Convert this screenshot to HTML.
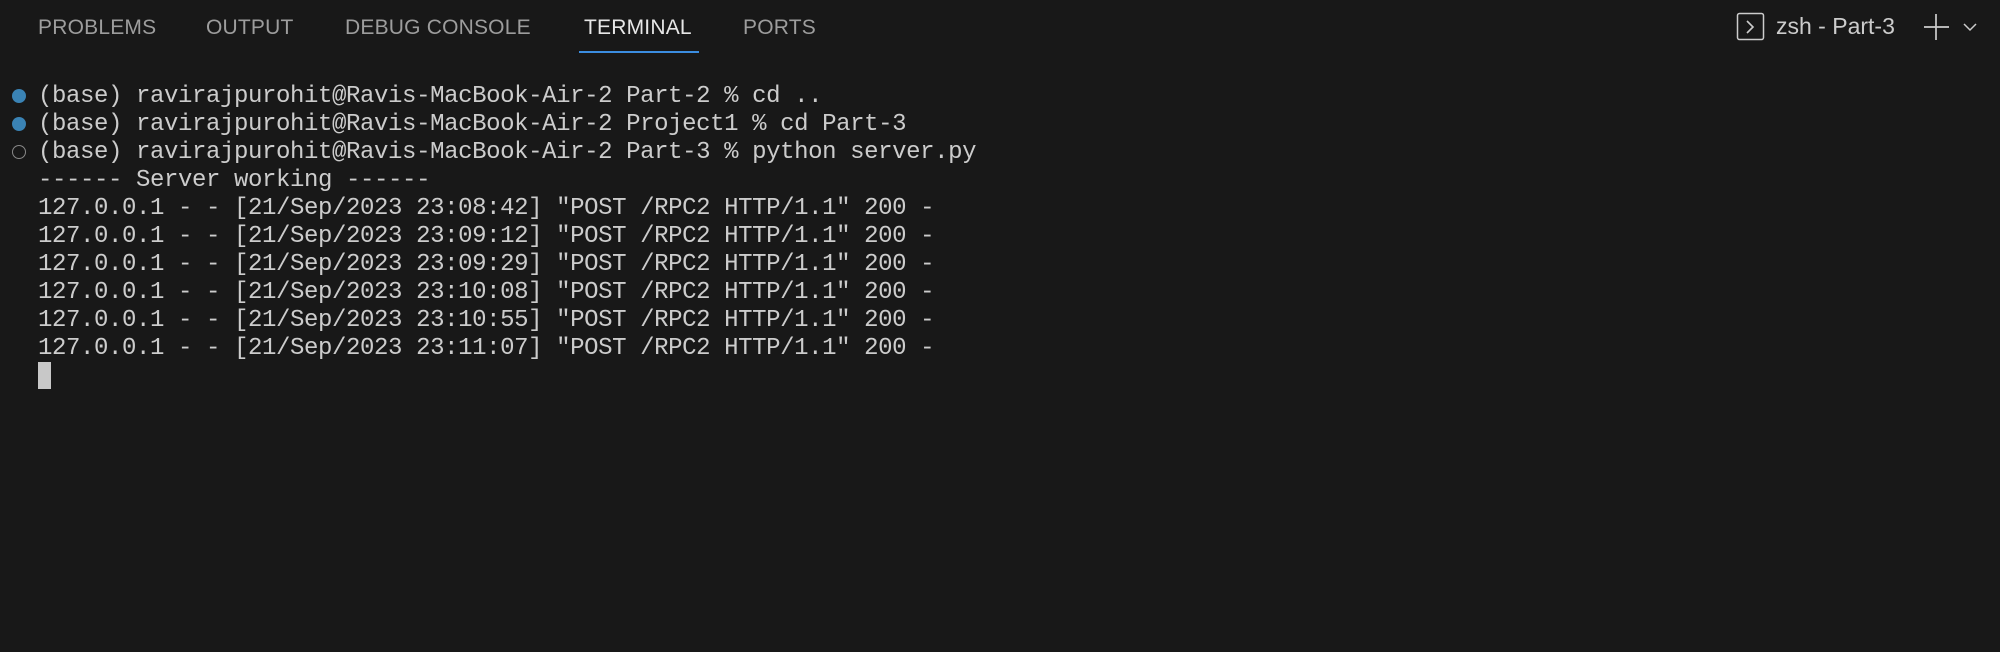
<!DOCTYPE html>
<html><head><style>
body{margin:0;width:2000px;height:652px;background:#181818;overflow:hidden;position:relative;font-family:"Liberation Sans",sans-serif}
.tab{position:absolute;top:16px;font-size:21px;color:#9d9d9d;letter-spacing:0.2px}
.ul{position:absolute;left:579px;top:51px;width:120px;height:2px;background:#3b8de0}
.term{position:absolute;left:38px;top:83px;font-family:"Liberation Mono",monospace;font-size:24px;color:#cccccc;line-height:28px;white-space:pre;letter-spacing:-0.4px}
.dot{position:absolute;left:12px;width:14px;height:14px;border-radius:50%;box-sizing:border-box}
.cur{position:absolute;left:38px;top:362px;width:13px;height:27px;background:#c8c8c8}
</style></head><body>
<div class="tab" style="left:38px">PROBLEMS</div>
<div class="tab" style="left:206px">OUTPUT</div>
<div class="tab" style="left:345px">DEBUG CONSOLE</div>
<div class="tab" style="left:584px;color:#e7e7e7">TERMINAL</div>
<div class="tab" style="left:743px">PORTS</div>
<div class="ul"></div>
<svg style="position:absolute;left:1736px;top:12px" width="30" height="30"><rect x="1.5" y="1.5" width="26" height="26" rx="2" fill="none" stroke="#cccccc" stroke-width="1.5"/><path d="M11 9 L17 15 L11 21" fill="none" stroke="#cccccc" stroke-width="1.6"/></svg>
<div style="position:absolute;left:1776px;top:13px;font-size:23px;color:#cccccc">zsh - Part-3</div>
<svg style="position:absolute;left:1923px;top:13px" width="28" height="28"><path d="M13 1 V27 M1 14 H26" stroke="#cccccc" stroke-width="1.7"/></svg>
<svg style="position:absolute;left:1962px;top:21px" width="16" height="12"><path d="M2 3 L8 9 L14 3" fill="none" stroke="#cccccc" stroke-width="1.5"/></svg>
<div class="dot" style="top:89px;background:#3a83b5"></div>
<div class="dot" style="top:117px;background:#3a83b5"></div>
<div class="dot" style="top:145px;border:1.5px solid #888"></div>
<div class="term">(base) ravirajpurohit@Ravis-MacBook-Air-2 Part-2 % cd ..
(base) ravirajpurohit@Ravis-MacBook-Air-2 Project1 % cd Part-3
(base) ravirajpurohit@Ravis-MacBook-Air-2 Part-3 % python server.py
------ Server working ------
127.0.0.1 - - [21/Sep/2023 23:08:42] "POST /RPC2 HTTP/1.1" 200 -
127.0.0.1 - - [21/Sep/2023 23:09:12] "POST /RPC2 HTTP/1.1" 200 -
127.0.0.1 - - [21/Sep/2023 23:09:29] "POST /RPC2 HTTP/1.1" 200 -
127.0.0.1 - - [21/Sep/2023 23:10:08] "POST /RPC2 HTTP/1.1" 200 -
127.0.0.1 - - [21/Sep/2023 23:10:55] "POST /RPC2 HTTP/1.1" 200 -
127.0.0.1 - - [21/Sep/2023 23:11:07] "POST /RPC2 HTTP/1.1" 200 -</div>
<div class="cur"></div>
</body></html>
